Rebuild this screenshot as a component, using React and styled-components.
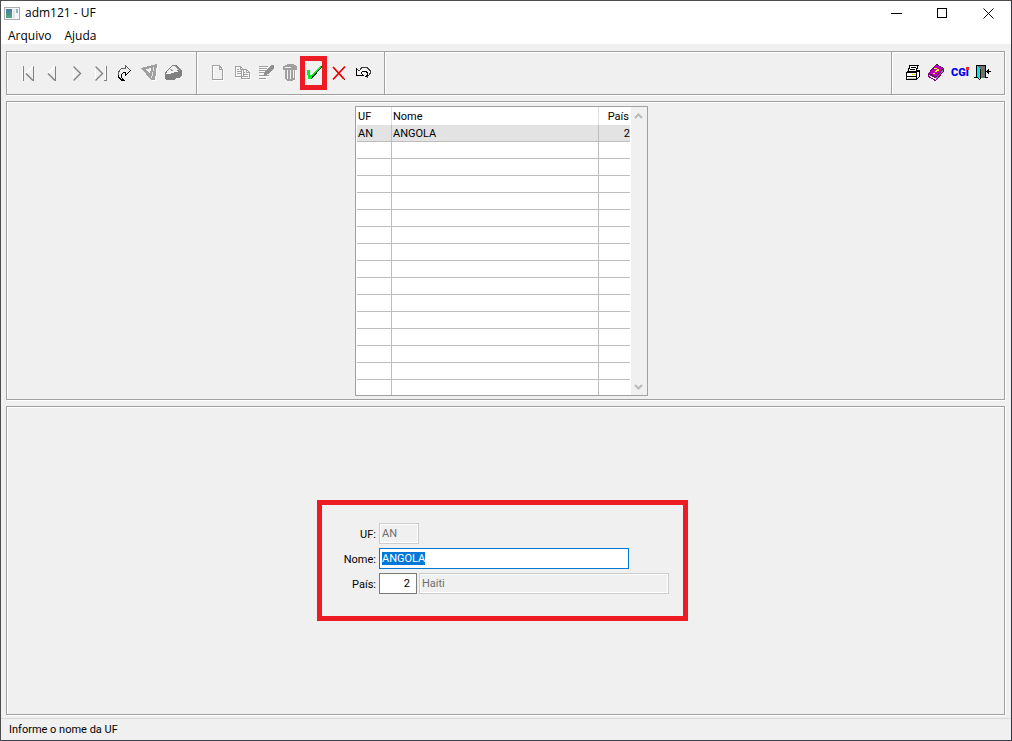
import React, { useEffect, useRef, useState } from 'react';
import styled, { createGlobalStyle } from 'styled-components';

const GlobalStyle = createGlobalStyle`
    *, *::before, *::after {
        box-sizing: border-box;
    }
    body {
        margin: 0;
        background: #f0f0f0;
        color: #000;
        font-family: Roboto, "Liberation Sans", sans-serif;
        font-size: 11px;
        line-height: 14px;
    }
    button, input {
        font: inherit;
        color: inherit;
    }
`;

const Window = styled.div`
    display: flex;
    flex-direction: column;
    min-height: 100vh;
    background: #f0f0f0;
    border: 1px solid #4d4d50;
    border-right-color: #26374f;
    border-bottom-color: #3a4352;
`;

const TitleBar = styled.header`
    display: flex;
    align-items: center;
    height: 24px;
    padding-left: 3px;
    background: #fff;
    font-family: "Open Sans", "Noto Sans", sans-serif;
`;

const Title = styled.h1`
    flex: 1;
    margin: 0 0 0 5px;
    font-size: 12px;
    font-weight: 400;
    line-height: 16px;
`;

const CaptionButton = styled.button`
    display: flex;
    align-items: center;
    justify-content: center;
    width: 46px;
    height: 24px;
    padding: 0;
    border: 0;
    background: none;
    &:hover {
        background: #e5e5e5;
    }
`;

const MenuBar = styled.nav`
    display: flex;
    gap: 13px;
    height: 19px;
    padding: 2px 0 0 7px;
    background: #fff;
    font-family: "Open Sans", "Noto Sans", sans-serif;
    font-size: 12px;
`;

const MenuItem = styled.button`
    padding: 0;
    border: 0;
    background: none;
    line-height: 17px;
`;

const Main = styled.main`
    flex: 1;
    display: flex;
    flex-direction: column;
    gap: 6px;
    padding: 7px 6px 3px 5px;
`;

const Frame = styled.section`
    border: 1px solid #a0a0a0;
    box-shadow: 1px 1px 0 #fff, inset 1px 1px 0 #fff;
`;

const Toolbar = styled(Frame)`
    display: flex;
    height: 44px;
`;

const ToolGroup = styled.div`
    display: flex;
    align-items: center;
    flex: ${(p) => (p.$grow ? 1 : 'none')};
    padding: ${(p) => p.$padding || '0'};
    border-right: ${(p) => (p.$last ? '0' : '1px solid #a0a0a0')};
    box-shadow: ${(p) => (p.$last ? 'none' : '1px 0 0 #fff')};
`;

const ToolButton = styled.button`
    position: relative;
    width: 24px;
    height: 24px;
    padding: 0;
    border: 0;
    background: none;
    svg {
        display: block;
    }
    &::after {
        content: ${(p) => (p.$marked ? '""' : 'none')};
        position: absolute;
        inset: -5px -1px -5px -2px;
        border: 5px solid #ed1c24;
    }
`;

const GridPanel = styled(Frame)`
    display: flex;
    justify-content: center;
    padding: 4px 8px 3px 0;
`;

const GridBox = styled.div`
    display: flex;
    gap: 1px;
    padding-left: 1px;
    border: 1px solid #a0a0a0;
    background: #fff;
`;

const Table = styled.table`
    width: 273px;
    table-layout: fixed;
    border-collapse: separate;
    border-spacing: 0;
`;

const Th = styled.th`
    width: ${(p) => p.$width};
    height: 18px;
    padding: 2px 1px 0;
    border-right: ${(p) => (p.$last ? '0' : '1px solid #e0e0e0')};
    font-weight: 400;
    text-align: ${(p) => p.$align || 'left'};
`;

const Td = styled.td`
    height: 17px;
    padding: 1px 0 0 1px;
    border-right: ${(p) => (p.$last ? '0' : '1px solid #bdbdbd')};
    border-bottom: 1px solid #bdbdbd;
    text-align: ${(p) => p.$align || 'left'};
`;

const Tr = styled.tr`
    background: ${(p) => (p.$selected ? '#e3e3e3' : '#fff')};
    &:last-child td {
        height: 15px;
        border-bottom: 0;
    }
`;

const ScrollTrack = styled.div`
    display: flex;
    flex-direction: column;
    justify-content: space-between;
    width: 16px;
    background: #f0f0f0;
`;

const ScrollButton = styled.button`
    display: flex;
    align-items: center;
    justify-content: center;
    height: 17px;
    padding: 0;
    border: 0;
    background: none;
`;

const FormPanel = styled(Frame)`
    flex: 1;
    display: flex;
    align-items: center;
    justify-content: center;
    padding-right: 6px;
`;

const Form = styled.form`
    display: grid;
    grid-template-columns: 54px auto;
    grid-auto-rows: 21px;
    gap: 4px 3px;
    padding: 18px 14px 22px 0;
    border: 5px solid #ed1c24;
`;

const Label = styled.label`
    line-height: 23px;
    text-align: right;
`;

const Fields = styled.div`
    display: flex;
    gap: 2px;
`;

const Input = styled.input`
    width: ${(p) => p.$width};
    height: 21px;
    padding: 0 6px 1px 2px;
    border: 1px solid #7a7a7a;
    border-radius: 0;
    outline: 0;
    background: #fff;
    text-align: ${(p) => p.$align || 'left'};
    &:focus {
        border-color: #0078d7;
    }
    &:disabled {
        border-color: #ccc;
        box-shadow: inset 0 0 0 1px #fff;
        background: #f0f0f0;
        color: #6d6d6d;
    }
    &::selection {
        background: #0078d7;
        color: #fff;
    }
`;

const StatusBar = styled.footer`
    height: 22px;
    padding-left: 8px;
    border-top: 1px solid #d7d7d7;
    line-height: 21px;
`;

const Glyph = ({ children }) => (
    <svg width="24" height="24" viewBox="0 0 24 24" fill="none" shapeRendering="crispEdges" aria-hidden="true">
        {children}
    </svg>
);

const Slope = ({ d, color = '#808080', width = 1.4 }) => (
    <path d={d} stroke={color} strokeWidth={width} shapeRendering="auto" />
);

// disabled icons are gray with a white edge, one pixel down and to the right
const Etched = ({ d }) => (
    <Glyph>
        <path d={d} stroke="#fff" transform="translate(1 1)" />
        <path d={d} stroke="#a0a0a0" />
    </Glyph>
);

const FirstIcon = () => (
    <Glyph>
        <path d="M5.5 5v14" stroke="#fff" />
        <path d="M6.5 5v15M16.5 5v15" stroke="#808080" />
        <Slope d="M16 5l-7 7.5" color="#fff" />
        <Slope d="M9 12.5l7 7" />
    </Glyph>
);

const PreviousIcon = () => (
    <Glyph>
        <path d="M14.5 5v15" stroke="#808080" />
        <Slope d="M14 5l-7 7.5" color="#fff" />
        <Slope d="M7 12.5l7 7" />
    </Glyph>
);

const NextIcon = () => (
    <Glyph>
        <path d="M8.5 5v15" stroke="#fff" />
        <Slope d="M8.5 5.5l7 7l-7 7" />
    </Glyph>
);

const LastIcon = () => (
    <Glyph>
        <path d="M6.5 5v15M16.5 5v14" stroke="#fff" />
        <Slope d="M6.5 5.5l7 7l-7 7" />
        <path d="M17.5 5v15M15 19.5h3" stroke="#808080" />
    </Glyph>
);

const GoToIcon = () => (
    <Glyph>
        <path d="M5 14v-3l3-4h5v-3l5 5l-5 5v-3h-3l-2 2v3l2 3h-2z" fill="#f0f0f0" />
        <path d="M5.5 15v-4l3-3.5h4v-3l5 5" stroke="#606060" />
        <path d="M17.5 9.5l-5 5v-3h-2l-2 2v3l2 2.500h-2l-3-3v-2" stroke="#000" />
    </Glyph>
);

const FilterIcon = () => (
    <Glyph>
        <path d="M20.5 4l-2 15h-4" stroke="#fff" />
        <path d="M4 7l16-4l-2 16h-4z" fill="#a0a0a0" />
        <path d="M9 8l5-1l-1 6z" fill="#f4f4f4" />
        <path d="M16.5 6v4M15.5 11v4M14.500 15v2" stroke="#e4e4e4" />
    </Glyph>
);

const SearchIcon = () => (
    <Glyph>
        <path d="M4 11l8-7h3l6 5v5l-3 3h-3l-2 2h-8l-1-2z" fill="#808080" />
        <path d="M5 11l7-6h2l3 4l-3 1l-3 2h-4z" fill="#f0f0f0" />
        <path d="M5 12.5h5M11 11.5h2M13 10.5h4" stroke="#f8f8f8" />
        <path d="M9.5 8l2 2M14 5l5 5" stroke="#a0a0a0" />
    </Glyph>
);

const NewIcon = () => <Etched d="M6.5 4.5h7l3 4v10h-10zM13.5 4.5v4h3" />;

const CopyIcon = () => (
    <Etched d="M5.5 5.5h5l3 3v7h-8zM10.5 5.5v3M7 8.5h2M7 10.5h4M7 12.5h4M11.5 8.5h5l3 3v6h-8zM16.5 8.5v3h3M13 11.5h2M13 13.5h5M13 15.5h5" />
);

const EditIcon = () => (
    <Glyph>
        <path d="M6 6.5h10M6 8.5h9M6 10.5h7M6 12.5h6M6 15.5h12M6 18.5h8" stroke="#fff" />
        <path d="M5 5.5h9M5 7.5h8M5 9.5h7M5 11.5h6M5 14.5h10M5 17.5h7" stroke="#a0a0a0" />
        <path d="M17 4h3v3l-6 6l-3 2h-2l2-4z" fill="#909090" />
    </Glyph>
);

const TrashIcon = () => (
    <Glyph>
        <path d="M8 8h10v10l-2 2h-6l-2-2z" fill="#fff" />
        <path d="M5 5l3-1l2-1h5l2 1l2 2v3h-2v10h-1l-2 1h-4l-2-1l-1-1v-9h-2z" fill="#a0a0a0" />
        <path d="M7 6.5h6M9.5 9v9M12.5 9v9M15.5 9v8" stroke="#f4f4f4" />
    </Glyph>
);

const ConfirmIcon = () => (
    <Glyph>
        <path d="M7 10l2 5l9-10h2v1l-10 12h-2z" fill="#003000" />
        <path d="M5 9h3v5h1l9-9h1v1l-9 10l-2 2h-2z" fill="#00f020" />
    </Glyph>
);

const CancelIcon = () => (
    <Glyph>
        <Slope d="M8 7l11 12" color="#700000" width={1} />
        <Slope d="M7 6l11 12M19 5.5l-12 13" color="#f00000" width={1.8} />
    </Glyph>
);

const UndoIcon = () => (
    <Glyph>
        <path d="M6.5 7.5v7h7l-2-2l2-2h3l1 2v2l-2 2h2l3-3v-3l-3-3h-5l-3 2z" fill="#f4f4f4" />
        <path d="M6.5 7v7.5h7l-2.500-2.500l2-2h3l1.500 2v2l-2 2" stroke="#000" />
        <path d="M7 8l2 2l3-3.5h5l3 3v3l-3 4" stroke="#404040" />
    </Glyph>
);

const PrintIcon = () => (
    <Glyph>
        <path d="M10 4.5h8l-2 6h-8z" fill="#fff" stroke="#000" />
        <path d="M11 6.5h5M10 8.5h5" stroke="#000" />
        <path d="M6.5 11.5h10l3-2v6l-3 3h-10z" fill="#fff" stroke="#000" />
        <path d="M7 15.5h10M16.5 12v6M7 10.5h2M17 9.5h3" stroke="#000" />
        <path d="M12 13.5h4" stroke="#d8d800" />
        <path d="M8 17h8" stroke="#c0c0c0" />
    </Glyph>
);

const HelpIcon = () => (
    <Glyph>
        <path d="M4.5 13.5v2l7 4l8-9v-3l-8 9z" fill="#fff" stroke="#800080" />
        <path d="M4.5 12.5l8-9l7 4l-8 9z" fill="#c000c0" stroke="#800080" />
        <path d="M12.5 3.5l7 4l-3 3M6 13l5 3" stroke="#303030" />
        <path d="M10 7.5h3M13 8.5h2M12 9.5h3M11 10.5h2M9 12.5h2" stroke="#ffff00" />
        <path d="M12 17.5l7-8" stroke="#808080" />
    </Glyph>
);

const CgiIcon = () => (
    <Glyph>
        <text x="3" y="15" fill="#0000f0" fontFamily="Roboto, sans-serif" fontWeight="900" fontSize="11">CGi</text>
        <rect x="18" y="6" width="3" height="3" fill="#ff2020" />
    </Glyph>
);

const ExitIcon = () => (
    <Glyph>
        <path d="M5 4h9v13h-9z" fill="#707070" />
        <path d="M4.5 17v-12.5h9v12" stroke="#000" />
        <path d="M5 5l4 3v10l-4-2z" fill="#00e8e8" />
        <path d="M8.5 8v10M5 16.5l3 2M2 16.5h3M13 16.5h3M14 10.5h5M15.5 9v3M16.5 8v5" stroke="#000" />
    </Glyph>
);

const NAVIGATION = [
    { label: 'Primeiro', icon: FirstIcon },
    { label: 'Anterior', icon: PreviousIcon },
    { label: 'Próximo', icon: NextIcon },
    { label: 'Último', icon: LastIcon },
    { label: 'Ir para', icon: GoToIcon },
    { label: 'Filtrar', icon: FilterIcon },
    { label: 'Pesquisar', icon: SearchIcon },
];

const EDITION = [
    { label: 'Incluir', icon: NewIcon },
    { label: 'Copiar', icon: CopyIcon },
    { label: 'Alterar', icon: EditIcon },
    { label: 'Excluir', icon: TrashIcon },
    { label: 'Confirmar', icon: ConfirmIcon, marked: true },
    { label: 'Cancelar', icon: CancelIcon },
    { label: 'Desfazer', icon: UndoIcon },
];

const GENERAL = [
    { label: 'Imprimir', icon: PrintIcon },
    { label: 'Manual', icon: HelpIcon },
    { label: 'CGI', icon: CgiIcon },
    { label: 'Sair', icon: ExitIcon },
];

const ROW_COUNT = 16;
const rows = [{ uf: 'AN', nome: 'ANGOLA', pais: 2 }];

const Tools = ({ items }) =>
    items.map(({ label, icon: Icon, marked }) => (
        <ToolButton key={label} type="button" aria-label={label} $marked={marked}>
            <Icon />
        </ToolButton>
    ));

const UfGrid = () => (
    <GridBox>
        <Table>
            <thead>
                <tr>
                    <Th $width="35px">UF</Th>
                    <Th $width="207px">Nome</Th>
                    <Th $width="31px" $align="right" $last>País</Th>
                </tr>
            </thead>
            <tbody>
                {Array.from({ length: ROW_COUNT }, (_, i) => rows[i] || {}).map((row, i) => (
                    <Tr key={i} $selected={i === 0}>
                        <Td>{row.uf}</Td>
                        <Td>{row.nome}</Td>
                        <Td $align="right" $last>{row.pais}</Td>
                    </Tr>
                ))}
            </tbody>
        </Table>
        <ScrollTrack>
            <ScrollButton type="button" aria-label="Subir">
                <svg width="10" height="6" viewBox="0 0 10 6" fill="none">
                    <path d="M1 5l3.5-3.5l3.5 3.5" stroke="#bababa" strokeWidth="2" />
                </svg>
            </ScrollButton>
            <ScrollButton type="button" aria-label="Descer">
                <svg width="10" height="6" viewBox="0 0 10 6" fill="none">
                    <path d="M1 1l3.5 3.5l3.5-3.5" stroke="#bababa" strokeWidth="2" />
                </svg>
            </ScrollButton>
        </ScrollTrack>
    </GridBox>
);

const UfForm = () => {
    const nomeRef = useRef(null);
    const [nome, setNome] = useState('ANGOLA');
    const [pais, setPais] = useState('2');

    useEffect(() => {
        nomeRef.current.focus();
        nomeRef.current.select();
    }, []);

    return (
        <Form onSubmit={(e) => e.preventDefault()}>
            <Label htmlFor="uf">UF:</Label>
            <Fields>
                <Input id="uf" $width="40px" value="AN" disabled />
            </Fields>
            <Label htmlFor="nome">Nome:</Label>
            <Fields>
                <Input id="nome" ref={nomeRef} $width="250px" value={nome} onChange={(e) => setNome(e.target.value)} />
            </Fields>
            <Label htmlFor="pais">País:</Label>
            <Fields>
                <Input id="pais" $width="38px" $align="right" value={pais} onChange={(e) => setPais(e.target.value)} />
                <Input aria-label="Nome do país" $width="250px" value="Haiti" disabled />
            </Fields>
        </Form>
    );
};

const App = () => (
    <>
        <GlobalStyle />
        <Window>
            <TitleBar>
                <svg width="16" height="13" viewBox="0 0 16 13" aria-hidden="true">
                    <defs>
                        <linearGradient id="pane" x1="0" y1="0" x2="0" y2="1">
                            <stop offset="0" stopColor="#4a7ba8" />
                            <stop offset="1" stopColor="#4fa67c" />
                        </linearGradient>
                    </defs>
                    <rect x="0.5" y="0.5" width="15" height="12" fill="#f4f6f7" stroke="#a9adb0" />
                    <rect x="2" y="2" width="6" height="9" fill="url(#pane)" />
                    <rect x="9" y="2" width="2" height="9" fill="#dfe5ea" />
                    <rect x="12" y="2" width="2" height="4" fill="#8fb4cc" />
                </svg>
                <Title>adm121 - UF</Title>
                <CaptionButton type="button" aria-label="Minimizar">
                    <svg width="11" height="11"><path d="M0 5.5h11" stroke="#000" /></svg>
                </CaptionButton>
                <CaptionButton type="button" aria-label="Maximizar">
                    <svg width="11" height="11" shapeRendering="crispEdges">
                        <rect x="0.5" y="0.5" width="9" height="9" fill="none" stroke="#000" />
                    </svg>
                </CaptionButton>
                <CaptionButton type="button" aria-label="Fechar">
                    <svg width="11" height="11"><path d="M.5 .5l10 10M10.5 .5l-10 10" stroke="#000" /></svg>
                </CaptionButton>
            </TitleBar>
            <MenuBar>
                <MenuItem type="button">Arquivo</MenuItem>
                <MenuItem type="button">Ajuda</MenuItem>
            </MenuBar>
            <Main>
                <Toolbar>
                    <ToolGroup $padding="0 11px 0 10px">
                        <Tools items={NAVIGATION} />
                    </ToolGroup>
                    <ToolGroup $padding="0 10px 0 9px">
                        <Tools items={EDITION} />
                    </ToolGroup>
                    <ToolGroup $grow />
                    <ToolGroup $padding="0 8px" $last>
                        <Tools items={GENERAL} />
                    </ToolGroup>
                </Toolbar>
                <GridPanel>
                    <UfGrid />
                </GridPanel>
                <FormPanel>
                    <UfForm />
                </FormPanel>
            </Main>
            <StatusBar>Informe o nome da UF</StatusBar>
        </Window>
    </>
);

export default App;
